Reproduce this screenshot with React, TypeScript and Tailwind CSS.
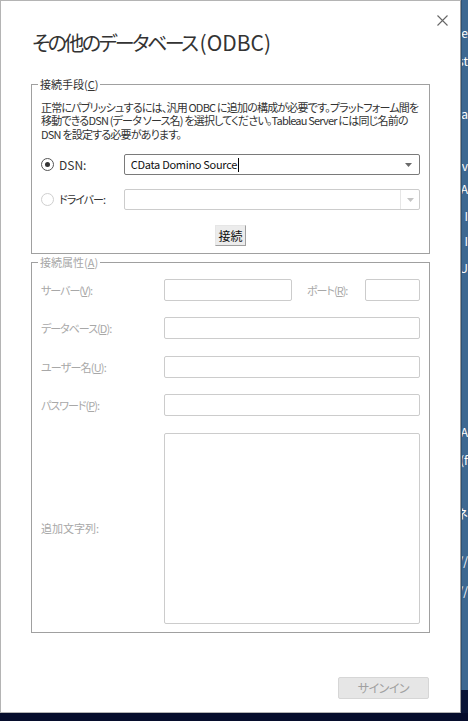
import React from "react";

const F = "font-['Noto_Sans_CJK_JP',sans-serif] [font-feature-settings:'palt']";

const stripLines: { t: string; cls: string }[] = [
  { t: "Ope", cls: "mt-[25px]" },
  { t: "Host", cls: "mt-[12px]" },
  { t: "Da", cls: "mt-[37px]" },
  { t: "Jav", cls: "mt-[36px]" },
  { t: "· A", cls: "mt-[7px]" },
  { t: "· I", cls: "mt-[11px]" },
  { t: "· I", cls: "mt-[9px]" },
  { t: "JU", cls: "mt-[11px]" },
  { t: "LA", cls: "mt-[148px]" },
  { t: "(f", cls: "mt-[12px]" },
  { t: "ネ", cls: "mt-[38px]" },
  { t: "//", cls: "mt-[31px]" },
  { t: "//", cls: "mt-[14px]" },
];

function Radio({ checked }: { checked?: boolean }) {
  return checked ? (
    <span className="w-[13px] h-[13px] rounded-full border border-[#555555] flex items-center justify-center shrink-0">
      <span className="w-[5px] h-[5px] rounded-full bg-[#333333]" />
    </span>
  ) : (
    <span className="w-[13px] h-[13px] rounded-full border border-[#cfcfcf] shrink-0" />
  );
}

function Arrow({ color }: { color: string }) {
  return (
    <svg width="7" height="4" viewBox="0 0 7 4">
      <path d="M0 0 L7 0 L3.5 4 Z" fill={color} />
    </svg>
  );
}

function Field({ w, h = "h-[22px]" }: { w: string; h?: string }) {
  return <div className={`${w} ${h} border border-[#cccccc] rounded-[2px] bg-white shrink-0`} />;
}

export default function App() {
  return (
    <div className={`w-[468px] h-[721px] bg-[#060d2c] flex flex-col overflow-hidden ${F}`}>
      <div className="flex h-[713px]">
        {/* Dialog */}
        <div className="w-[461px] h-[713px] bg-white border border-[#b4b4b4] border-r-[#9a9a9a] flex flex-col shrink-0">
          <div className="flex justify-between h-[75px] shrink-0">
            <div className="pl-[31px] pt-[27px] text-[20px] leading-[28px] text-[#333333] whitespace-nowrap">
              <span className="tracking-[-2.5px]">その他のデータベース</span>
              <span className="text-[21px] ml-[3px]">(ODBC)</span>
            </div>
            <svg className="mt-[14px] mr-[12px]" width="11" height="11" viewBox="0 0 11 11">
              <path d="M0.5 0.5 L10.5 10.5 M10.5 0.5 L0.5 10.5" stroke="#666666" strokeWidth="1.1" fill="none" />
            </svg>
          </div>

          {/* Group 1 */}
          <fieldset className="ml-[30px] w-[399px] min-w-0 border border-[#a0a0a0] pb-[7px]">
            <legend className="ml-[6px] px-[2px] text-[11px] leading-[16px] text-[#333333]">
              接続手段(<span className="underline">C</span>)
            </legend>
            <div className="pl-[9px] pr-[9px] pt-[9px] flex flex-col">
              <p className="text-[11px] leading-[13.4px] tracking-[-0.8px] text-[#333333] whitespace-nowrap">
                正常にパブリッシュするには、汎用 ODBC に追加の構成が必要です。プラットフォーム間を
                <br />
                移動できるDSN (データ ソース名) を選択してください。Tableau Server には同じ名前の
                <br />
                DSN を設定する必要があります。
              </p>
              <div className="mt-[13px] flex items-center h-[21px]">
                <Radio checked />
                <span className="ml-[5px] w-[65px] text-[12px] text-[#333333]">DSN:</span>
                <div className="w-[297px] h-[21px] border border-[#7a7a7a] rounded-[2px] flex items-center pl-[6px] pr-[7px]">
                  <span className="text-[11px] tracking-[-0.3px] text-[#111111] whitespace-nowrap">CData Domino Source</span>
                  <span className="w-px h-[14px] bg-black ml-[1px]" />
                  <span className="flex-1" />
                  <Arrow color="#6a6a6a" />
                </div>
              </div>
              <div className="mt-[14px] flex items-center h-[21px]">
                <Radio />
                <span className="ml-[5px] w-[65px] text-[11px] tracking-[-1px] text-[#333333]">ドライバー:</span>
                <div className="w-[297px] h-[21px] border border-[#cccccc] rounded-[2px] flex items-center">
                  <span className="flex-1" />
                  <span className="w-px h-[19px] bg-[#e6e6e6]" />
                  <span className="w-[18px] flex justify-center">
                    <Arrow color="#c4c4c4" />
                  </span>
                </div>
              </div>
              <div className="mt-[15px] flex justify-center">
                <button className="w-[31px] h-[21px] bg-[#ececec] border border-t-[#e6e6e6] border-l-[#e6e6e6] border-r-[#a0a0a0] border-b-[#a0a0a0] text-[12px] leading-[19px] text-[#111111]">
                  接続
                </button>
              </div>
            </div>
          </fieldset>

          {/* Group 2 */}
          <fieldset className="ml-[30px] w-[399px] min-w-0 border border-[#a0a0a0] pb-[8px]">
            <legend className="ml-[6px] px-[2px] text-[11px] leading-[16px] text-[#a8a8a8]">
              接続属性(<span className="underline">A</span>)
            </legend>
            <div className="pl-[9px] pt-[9px] flex flex-col text-[11px] text-[#a8a8a8]">
              <div className="flex items-center">
                <span className="w-[123px] tracking-[-1px]">
                  サーバー(<span className="underline">V</span>):
                </span>
                <Field w="w-[128px]" />
                <span className="ml-[15px] w-[58px] tracking-[-1px]">
                  ポート(<span className="underline">R</span>):
                </span>
                <Field w="w-[55px]" />
              </div>
              <div className="mt-[16px] flex items-center">
                <span className="w-[123px] tracking-[-1px]">
                  データベース(<span className="underline">D</span>):
                </span>
                <Field w="w-[256px]" />
              </div>
              <div className="mt-[17px] flex items-center">
                <span className="w-[123px] tracking-[-0.8px]">
                  ユーザー名(<span className="underline">U</span>):
                </span>
                <Field w="w-[256px]" />
              </div>
              <div className="mt-[16px] flex items-center">
                <span className="w-[123px] tracking-[-1px]">
                  パスワード(<span className="underline">P</span>):
                </span>
                <Field w="w-[256px]" />
              </div>
              <div className="mt-[17px] flex items-center">
                <span className="w-[123px]">追加文字列:</span>
                <Field w="w-[256px]" h="h-[191px]" />
              </div>
            </div>
          </fieldset>

          <div className="mt-[44px] flex justify-end pr-[31px]">
            <button className="w-[91px] h-[22px] bg-[#e6e6e6] border border-[#d6d6d6] rounded-[2px] text-[12px] leading-[20px] tracking-[-0.5px] text-[#a0a0a0]">
              サインイン
            </button>
          </div>
        </div>

        {/* Background window strip */}
        <div className="flex-1 flex flex-col min-w-0">
          <div className="h-[690px] bg-[#3d6891] border-l border-l-[#2e5275] overflow-hidden flex flex-col">
            {stripLines.map((l, i) => (
              <div
                key={i}
                className={`${l.cls} h-[16px] flex justify-end text-[12px] leading-[16px] text-white whitespace-nowrap`}
              >
                {l.t}
              </div>
            ))}
          </div>
          <div className="flex-1 bg-[#0a1536]" />
        </div>
      </div>
    </div>
  );
}
